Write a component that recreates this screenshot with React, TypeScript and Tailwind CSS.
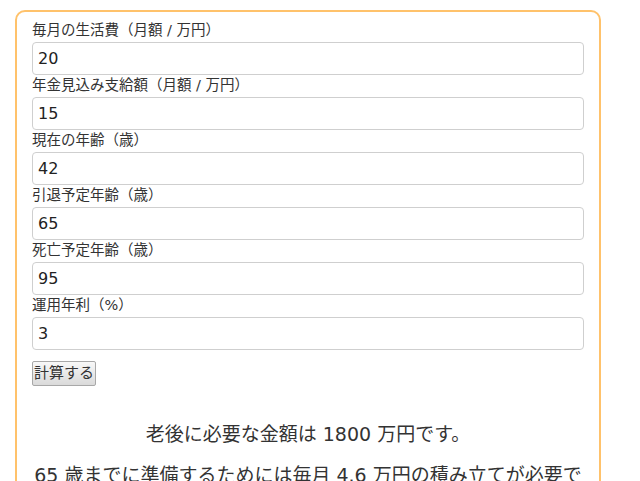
import { useState } from 'react';

// 老後資金シミュレーター — 入力フォームと計算結果

interface Field {
  id:    string;
  label: string;
  value: string;
}

const FIELDS: Field[] = [
  { id: 'living',   label: '毎月の生活費（月額 / 万円）',   value: '20' },
  { id: 'pension',  label: '年金見込み支給額（月額 / 万円）', value: '15' },
  { id: 'age',      label: '現在の年齢（歳）',             value: '42' },
  { id: 'retire',   label: '引退予定年齢（歳）',           value: '65' },
  { id: 'death',    label: '死亡予定年齢（歳）',           value: '95' },
  { id: 'rate',     label: '運用年利（%）',               value: '3'  },
];

const FONT = '[font-family:"DejaVu_Sans","Noto_Sans_CJK_JP",sans-serif]';

export default function App() {
  const [values, setValues] = useState<Record<string, string>>(
    Object.fromEntries(FIELDS.map(f => [f.id, f.value])),
  );

  return (
    <div className={`min-h-[481px] bg-white pt-[10px] text-[#333] ${FONT}`}>
      <div className="ml-[15px] w-[586px] rounded-[10px] border-2 border-[#ffc26b] px-[15px] pt-[8px] pb-[20px]">

        {/* Form fields */}
        {FIELDS.map(f => (
          <div key={f.id}>
            <label htmlFor={f.id} className="mb-[1px] block text-[14.5px] leading-[21px] text-[#333]">
              {f.label}
            </label>
            <input
              id={f.id}
              type="text"
              value={values[f.id]}
              onChange={e => setValues(v => ({ ...v, [f.id]: e.target.value }))}
              className={`block h-[33px] w-full rounded-[4px] border border-[#cfcfcf] bg-white px-[5px] text-[16px] text-[#222] outline-none ${FONT}`}
            />
          </div>
        ))}

        {/* Submit */}
        <button
          type="button"
          className={`mt-[11px] h-[25px] rounded-[2px] border border-[#a8a8a8] bg-linear-to-b from-[#f8f8f8] to-[#dadada] px-[1px] text-[15px] leading-none text-[#333] ${FONT}`}
        >
          計算する
        </button>

        {/* Result */}
        <div className="mt-[34px] text-center text-[19px] leading-[29px] text-[#333]">
          <p className="mb-[12px]">老後に必要な金額は 1800 万円です。</p>
          <p>65 歳までに準備するためには毎月 4.6 万円の積み立てが必要です。</p>
        </div>
      </div>
    </div>
  );
}
